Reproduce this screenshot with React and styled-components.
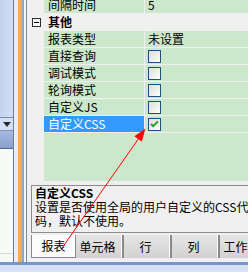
import React from 'react';
import styled, { createGlobalStyle } from 'styled-components';

const Global = createGlobalStyle`
  html, body { margin: 0; padding: 0; width: 248px; height: 272px; overflow: hidden; background: #d8e3f4; }
  body { font-family: "Noto Sans CJK SC", "Liberation Sans", sans-serif; font-size: 12px; color: #000; }
  * { box-sizing: border-box; }
`;

const Screen = styled.div`
  position: relative;
  width: 248px;
  height: 272px;
  overflow: hidden;
  display: flex;
  flex-direction: column;
`;

const Main = styled.div`
  display: flex;
  height: 262px;
  flex: none;
`;

const SidePanel = styled.div`
  width: 14px;
  flex: none;
  border-right: 1px solid #6c7c96;
  display: flex;
  flex-direction: column;
  background: #f6f9f6;
`;

const SideTop = styled.div`
  height: 118px;
  flex: none;
  background: linear-gradient(90deg, #c3d2ee, #d3dff4);
  border-bottom: 1px solid #7a8ba8;
`;

const SideDrop = styled.div`
  height: 13px;
  flex: none;
  display: flex;
  align-items: center;
  justify-content: center;
  background: #d3dff5;
  border-bottom: 1px solid #8293b4;
`;

const DropArrow = styled.span`
  width: 0;
  height: 0;
  border-left: 4px solid transparent;
  border-right: 4px solid transparent;
  border-top: 5px solid #2b2b2b;
`;

const SideBar = styled.div`
  height: 18px;
  flex: none;
  background: linear-gradient(#a7b9e0, #8aa0d0);
  border-bottom: 1px solid #56688a;
`;

const SideBody = styled.div`
  flex: 1;
  background: #f7faf7;
  border-bottom: 1px solid #c6e2c6;
  margin-bottom: 8px;
`;

const Splitter = styled.div`
  flex: none;
  width: 10px;
  background: #f5ac55;
  border-left: 4px solid #e8eef8;
  border-right: 2px solid #8ea6c8;
`;

const PanelFrame = styled.div`
  flex: 1;
  display: flex;
  padding-left: 2px;
  background: #f3f6fb;
  min-width: 0;
`;

const Panel = styled.div`
  flex: 1;
  min-width: 0;
  display: flex;
  flex-direction: column;
  border-left: 1px solid #7b8aa0;
  background: #f0f0f0;
`;

const Grid = styled.div`
  height: 181px;
  flex: none;
  overflow: hidden;
  background: linear-gradient(to right, #f0f0f0 17px, #cce8cc 17px);
`;

const Rows = styled.div`
  margin-top: -3px;
`;

const Row = styled.div`
  display: grid;
  grid-template-columns: 17px 100px 1fr;
  height: 17px;
  border-bottom: 1px solid #f0f0f0;
  background: ${p => (p.$category ? '#f0f0f0' : 'transparent')};
`;

const Gutter = styled.div`
  display: flex;
  align-items: center;
  padding-left: 5px;
`;

const Collapse = styled.span`
  width: 9px;
  height: 9px;
  border: 1px solid #303030;
  background: #f8f8f8;
  display: flex;
  align-items: center;
  justify-content: center;
  &::after {
    content: '';
    width: 5px;
    height: 1px;
    background: #000;
  }
`;

const NameCell = styled.div`
  padding-left: 4px;
  line-height: 16px;
  white-space: nowrap;
  overflow: hidden;
  font-weight: ${p => (p.$bold ? 700 : 400)};
  background: ${p => (p.$selected ? '#3399ff' : 'transparent')};
  color: ${p => (p.$selected ? '#fff' : '#000')};
`;

const ValueCell = styled.div`
  padding-left: 3px;
  line-height: 16px;
  display: flex;
  align-items: center;
  white-space: nowrap;
  border-left: ${p => (p.$category ? 'none' : '1px solid #f0f0f0')};
`;

const Check = styled.span`
  width: 13px;
  height: 13px;
  border: 1px solid #1c5180;
  background: linear-gradient(135deg, #dcdcd7 0%, #ffffff 100%);
  display: flex;
  align-items: center;
  justify-content: center;
`;

const DescArea = styled.div`
  flex: none;
  padding: 4px 0 2px 4px;
`;

const DescBox = styled.div`
  width: 260px;
  height: 48px;
  border: 1px solid #8c8c8c;
  padding: 0 0 0 3px;
  line-height: 14px;
  white-space: nowrap;
  overflow: hidden;
`;

const DescTitle = styled.div`
  font-weight: 700;
`;

const DescLine = styled.div``;

const TabBar = styled.div`
  flex: none;
  height: 23px;
  display: flex;
  padding-left: 4px;
  overflow: hidden;
`;

const Tab = styled.div`
  flex: none;
  width: ${p => (p.$active ? 45 : 48)}px;
  height: ${p => (p.$active ? 25 : 23)}px;
  margin-top: ${p => (p.$active ? -2 : 0)}px;
  display: flex;
  align-items: center;
  justify-content: center;
  padding-right: ${p => (p.$active ? 0 : 3)}px;
  background: ${p => (p.$active ? '#fcfcfc' : 'linear-gradient(#e6e6e6, #d1d1d1)')};
  border: ${p => (p.$active ? '1px solid #8a8a8a' : 'none')};
  border-top: none;
  border-right: ${p => (p.$active ? '1px solid #8a8a8a' : '2px solid #8a8a8a')};
  box-shadow: ${p => (p.$active ? 'none' : 'inset -1px 0 0 #ffffff')};
  white-space: nowrap;
`;

const BlueLine = styled.div`
  flex: none;
  height: 3px;
  background: #7497cc;
`;

const Status = styled.div`
  flex: 1;
  background: #d6e2f4;
`;

const Overlay = styled.svg`
  position: absolute;
  left: 0;
  top: 0;
  pointer-events: none;
`;

const props = [
  { name: '间隔时间', value: '5' },
  { name: '其他', category: true },
  { name: '报表类型', value: '未设置' },
  { name: '直接查询', check: false },
  { name: '调试模式', check: false },
  { name: '轮询模式', check: false },
  { name: '自定义JS', check: false },
  { name: '自定义CSS', check: true, selected: true },
];

const tabs = ['报表', '单元格', '行', '列', '工作表'];

export default function App() {
  return (
    <Screen>
      <Global />
      <Main>
        <SidePanel>
          <SideTop />
          <SideDrop><DropArrow /></SideDrop>
          <SideBar />
          <SideBody />
        </SidePanel>
        <Splitter />
        <PanelFrame>
          <Panel>
            <Grid>
              <Rows>
                {props.map(p => (
                  <Row key={p.name} $category={p.category}>
                    <Gutter>{p.category && <Collapse />}</Gutter>
                    <NameCell $bold={p.category} $selected={p.selected}>{p.name}</NameCell>
                    <ValueCell $category={p.category}>
                      {p.value}
                      {p.check !== undefined && (
                        <Check>
                          {p.check && (
                            <svg width="9" height="8" viewBox="0 0 9 8">
                              <path d="M1 4 L3.2 6.2 L8 1.4" fill="none" stroke="#21a121" strokeWidth="2" />
                            </svg>
                          )}
                        </Check>
                      )}
                    </ValueCell>
                  </Row>
                ))}
              </Rows>
            </Grid>
            <DescArea>
              <DescBox>
                <DescTitle>自定义CSS</DescTitle>
                <DescLine>设置是否使用全局的用户自定义的CSS代</DescLine>
                <DescLine>码，默认不使用。</DescLine>
              </DescBox>
            </DescArea>
            <TabBar>
              {tabs.map((t, i) => (
                <Tab key={t} $active={i === 0}>{t}</Tab>
              ))}
            </TabBar>
          </Panel>
        </PanelFrame>
      </Main>
      <BlueLine />
      <Status />
      <Overlay width="248" height="272" viewBox="0 0 248 272">
        <line x1="62" y1="248" x2="139" y2="138" stroke="#ff0000" strokeWidth="1" />
        <polygon points="145.5,128.5 141.8,141.4 134.4,136.2" fill="#ff0000" />
      </Overlay>
    </Screen>
  );
}
